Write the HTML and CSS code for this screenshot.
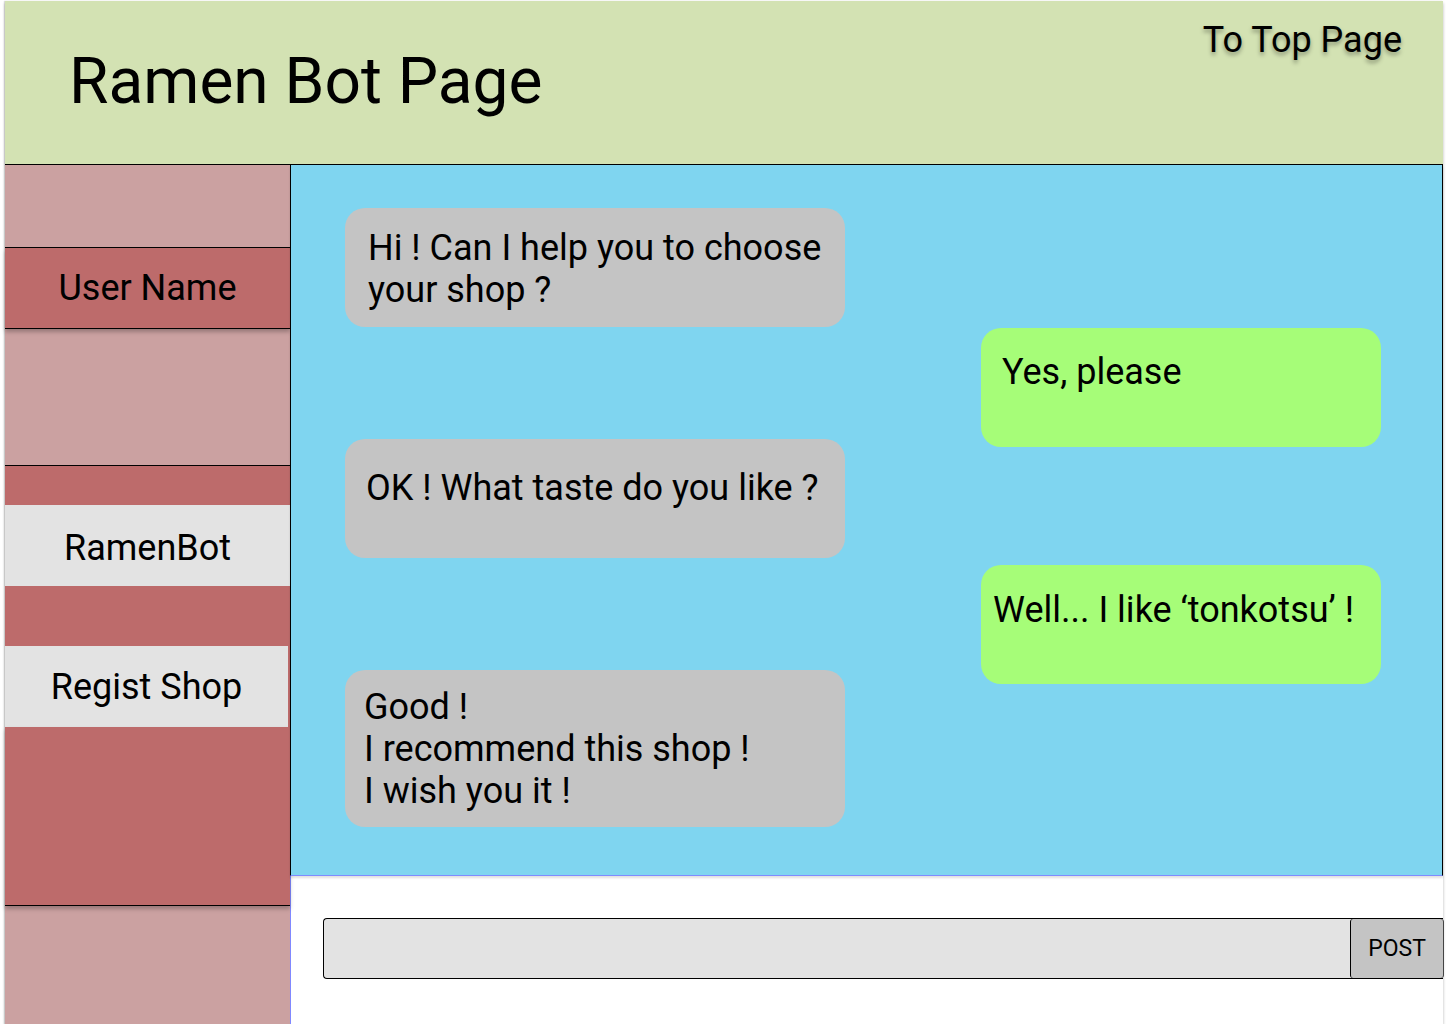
FILE: index.html
```html
<!DOCTYPE html>
<html lang="en">
<head>
<meta charset="utf-8">
<title>Ramen Bot Page</title>
<link rel="stylesheet" href="styles.css">
</head>
<body>
<div class="frame">
  <header class="header">
    <h1 class="title">Ramen Bot Page</h1>
    <a class="top-link" href="#">To Top Page</a>
  </header>
  <div class="body">
    <nav class="sidebar">
      <div class="sb sb-light sb-a"></div>
      <div class="sb sb-dark sb-user">User Name</div>
      <div class="sb sb-light sb-b"></div>
      <div class="sb sb-dark sb-c"></div>
      <div class="sb sb-item sb-item-bot">RamenBot</div>
      <div class="sb sb-dark sb-d"></div>
      <div class="sb sb-item sb-item-short">Regist Shop</div>
      <div class="sb sb-dark sb-e"></div>
      <div class="sb sb-light sb-f"></div>
    </nav>
    <main class="main">
      <section class="chat">
        <div class="bubble bot b1">Hi ! Can I help you to choose<br>your shop ?</div>
        <div class="bubble user b2">Yes, please</div>
        <div class="bubble bot b3">OK ! What taste do you like ?</div>
        <div class="bubble user b4">Well... I like ‘tonkotsu’ !</div>
        <div class="bubble bot b5">Good !<br>I recommend this shop !<br>I wish you it !</div>
      </section>
      <section class="composer">
        <div class="input-row">
          <div class="input"></div>
          <button class="post">POST</button>
        </div>
      </section>
    </main>
  </div>
</div>
</body>
</html>
```

FILE: styles.css
```css
html, body {
  margin: 0;
  padding: 0;
  background: #ffffff;
}
body {
  font-family: Roboto, "Liberation Sans", sans-serif;
  color: #000;
}
.frame {
  margin: 1px 0 0 5px;
  width: 1438px;
  height: 1023px;
  display: flex;
  flex-direction: column;
  box-shadow: 0 2px 3px rgba(0,0,0,0.28), -1px 0 1px rgba(0,0,0,0.12);
  background: #fff;
}
.header {
  height: 163px;
  background: #d3e2b3;
  border-bottom: 1px solid #000;
  display: flex;
  justify-content: space-between;
  align-items: flex-start;
  flex-shrink: 0;
}
.title {
  margin: 0;
  font-weight: 400;
  font-size: 64px;
  line-height: 75px;
  padding: 43px 0 0 64px;
}
.top-link {
  color: #000;
  text-decoration: none;
  font-size: 36px;
  line-height: 43px;
  padding: 18px 41px 0 0;
  text-shadow: 0 3px 4px rgba(0,0,0,0.35);
}
.body {
  flex: 1;
  display: flex;
  min-height: 0;
}
.sidebar {
  width: 285px;
  display: flex;
  flex-direction: column;
  flex-shrink: 0;
}
.sb {
  display: flex;
  align-items: center;
  justify-content: center;
  font-size: 36px;
  position: relative;
  box-sizing: border-box;
}
.sb-light { background: #cba1a1; }
.sb-dark { background: #bd6b6b; }
.sb-a { height: 83px; border-bottom: 1px solid #000; }
.sb-user {
  height: 81px;
  border-bottom: 1px solid #000;
  box-shadow: 0 3px 4px rgba(0,0,0,0.25);
  z-index: 1;
}
.sb-b { height: 137px; border-bottom: 1px solid #000; }
.sb-c { height: 39px; }
.sb-item {
  height: 81px;
  background: #e3e3e3;
}
.sb-item-bot { padding-top: 5px; }
.sb-item-short { margin-right: 2px; box-shadow: 2px 0 0 #bd6b6b; }
.sb-d { height: 60px; }
.sb-e {
  height: 179px;
  border-bottom: 1px solid #000;
  box-shadow: 0 3px 4px rgba(0,0,0,0.25);
  z-index: 1;
}
.sb-f { flex: 1; }
.main {
  flex: 1;
  display: flex;
  flex-direction: column;
  min-width: 0;
}
.chat {
  height: 710px;
  background: #7fd5f0;
  border-left: 1px solid #000;
  border-right: 1px solid #000;
  border-bottom: 1px solid #7f8cff;
  box-shadow: 0 2px 2px rgba(0,0,0,0.12);
  display: flex;
  flex-direction: column;
  flex-shrink: 0;
  position: relative;
  z-index: 1;
}
.bubble {
  box-sizing: border-box;
  font-size: 36px;
  line-height: 42px;
  border-radius: 20px;
  white-space: nowrap;
}
.bot {
  background: #c4c4c4;
  width: 500px;
  margin-left: 54px;
  align-self: flex-start;
}
.user {
  background: #a6fd78;
  width: 400px;
  margin-right: 61px;
  align-self: flex-end;
}
.b1 { margin-top: 43px; height: 119px; padding: 19px 0 0 23px; }
.b2 { margin-top: 1px; height: 119px; padding: 23px 0 0 21px; }
.b3 { margin-top: -8px; height: 119px; padding: 28px 0 0 21px; }
.b4 { margin-top: 7px; height: 119px; padding: 24px 0 0 12px; }
.b5 { margin-top: -14px; height: 157px; padding: 16px 0 0 19px; }
.composer {
  flex: 1;
  background: #fff;
  border-left: 1px solid #8088ff;
  padding: 42px 0 0 32px;
}
.input-row {
  display: flex;
  height: 61px;
  border: 1px solid #000;
  border-right: none;
  border-radius: 4px 0 0 4px;
  box-sizing: border-box;
  background: #e3e3e3;
}
.input { flex: 1; }
.post {
  width: 93px;
  margin: 0;
  border: none;
  border-left: 1px solid #000;
  border-radius: 3px;
  background: #c4c4c4;
  font-family: Roboto, "Liberation Sans", sans-serif;
  font-size: 23px;
  color: #000;
  padding: 0;
  box-shadow: 1px 0 0 #444;
}
```
